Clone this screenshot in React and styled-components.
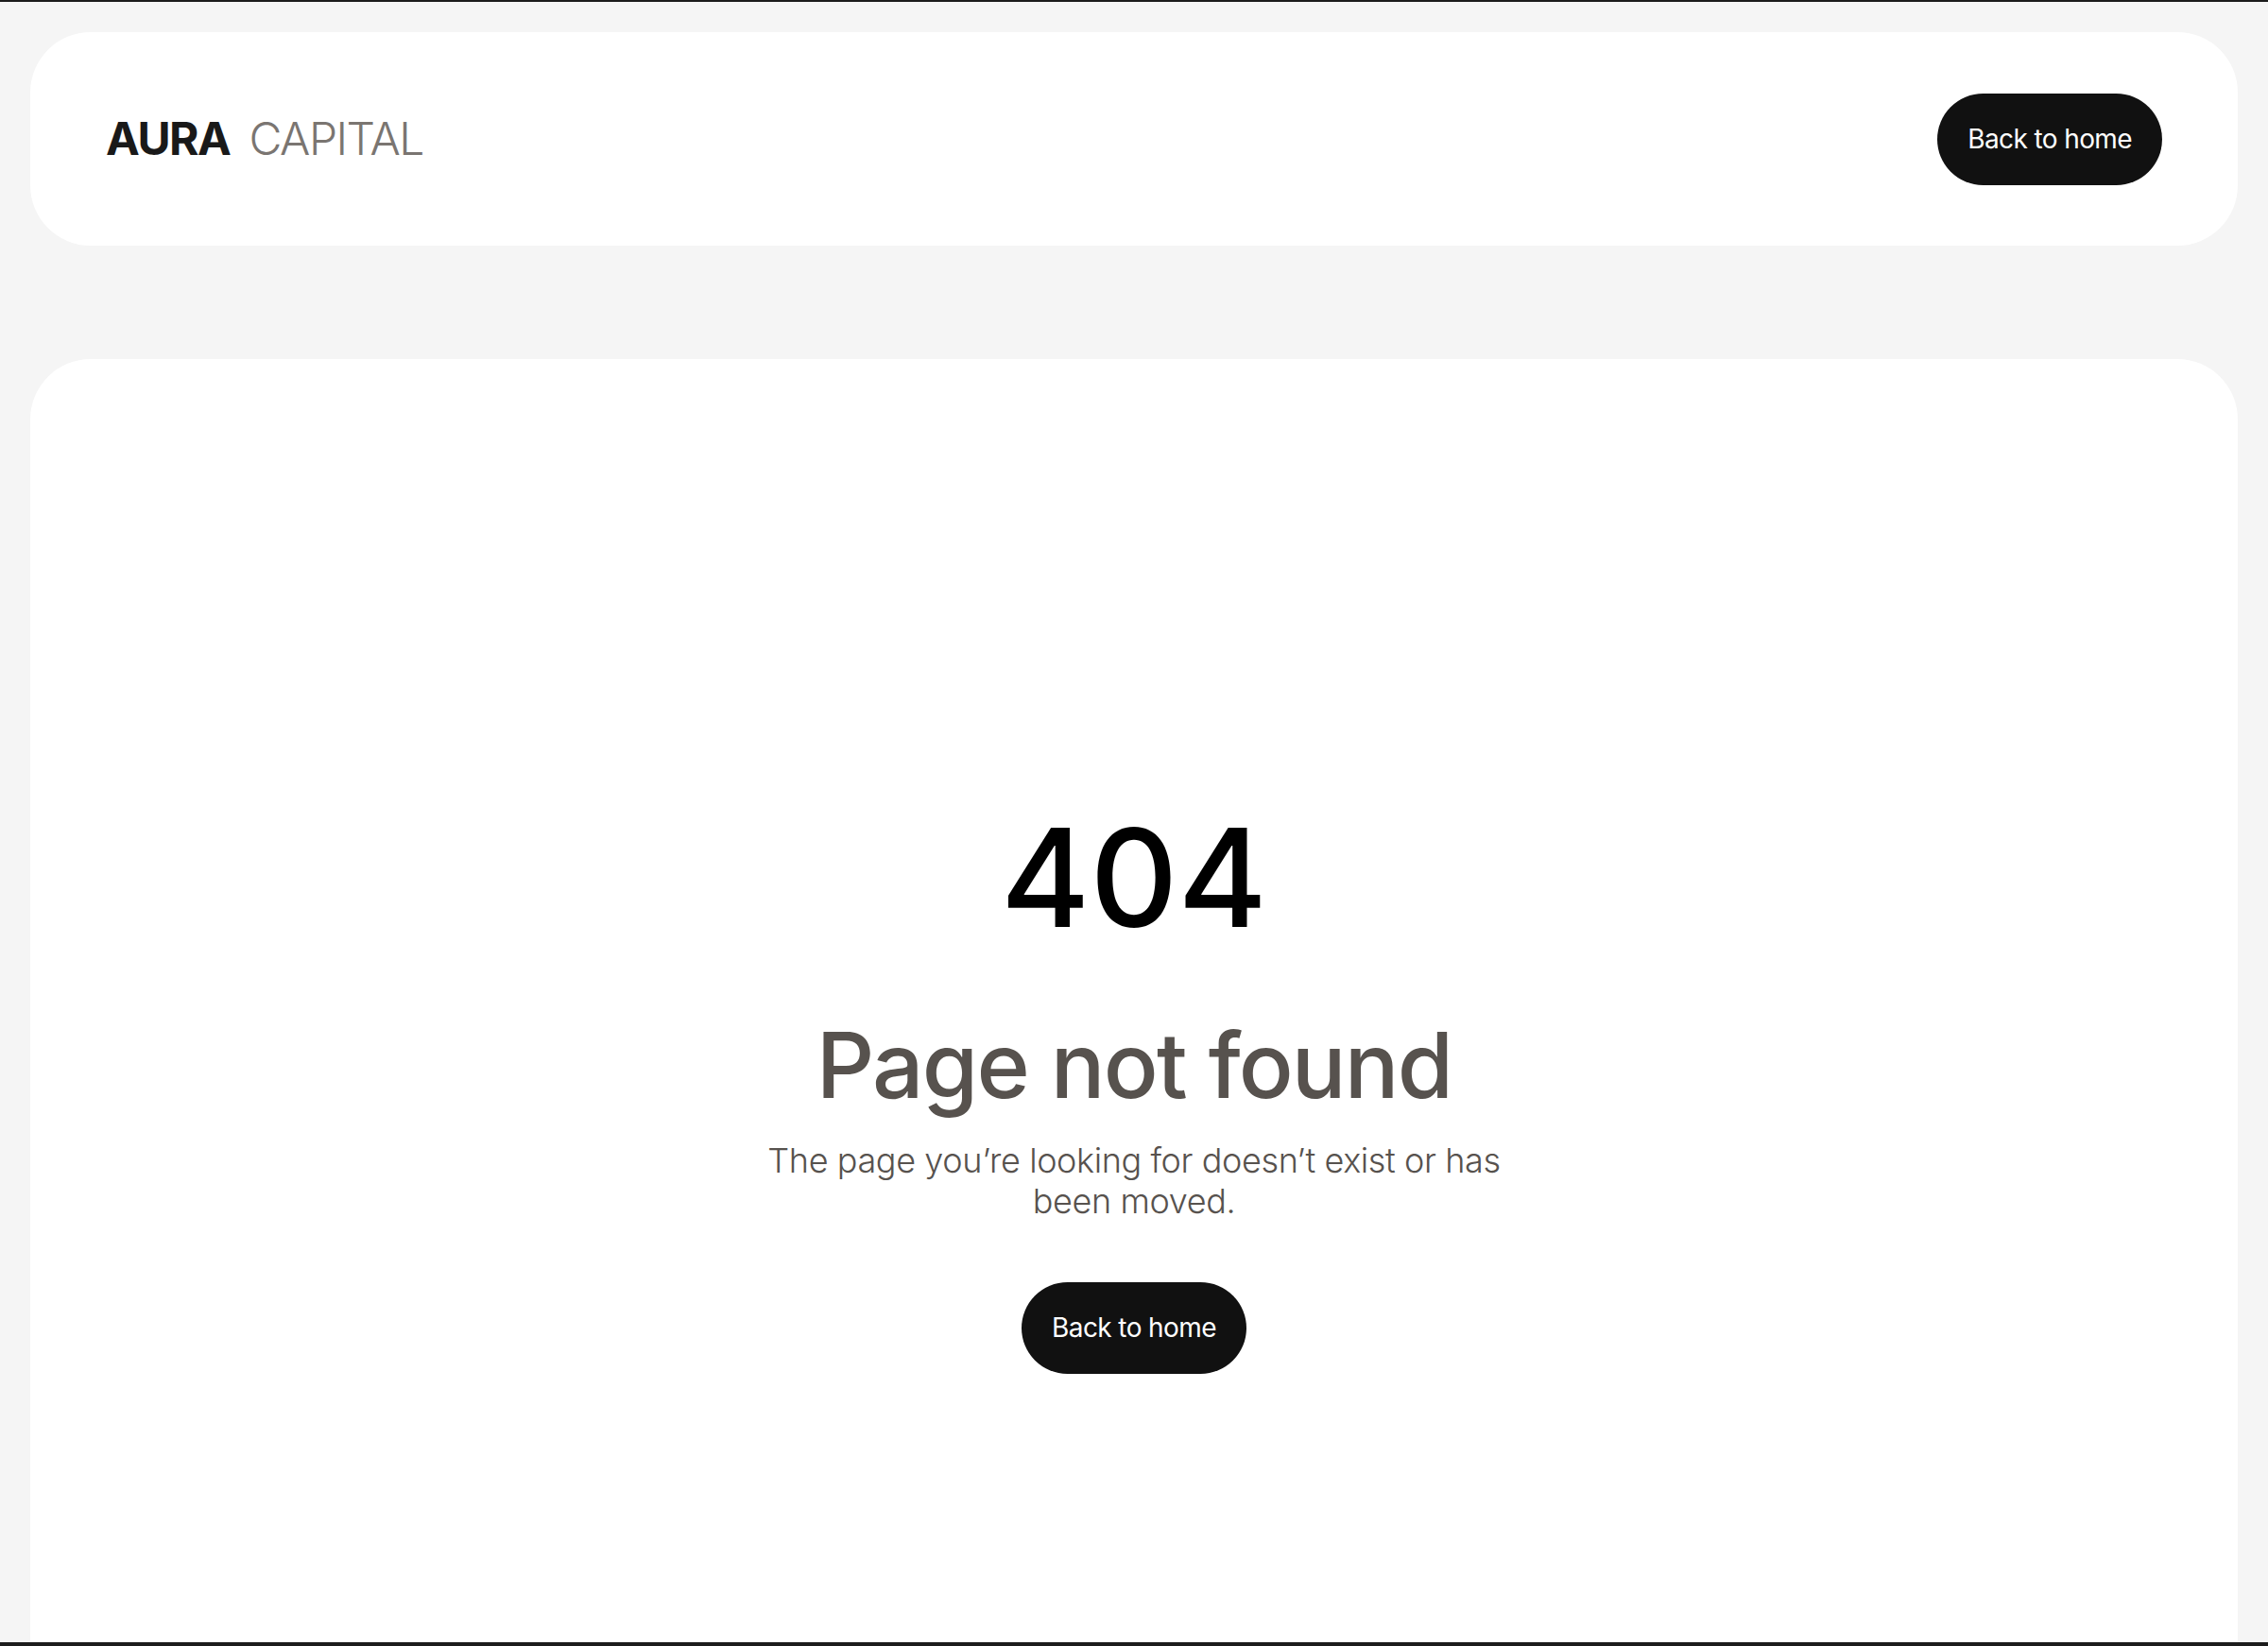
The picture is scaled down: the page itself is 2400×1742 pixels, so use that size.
import React from "react";
import styled, { createGlobalStyle } from "styled-components";

const GlobalStyle = createGlobalStyle`
  html, body {
    margin: 0;
    padding: 0;
    background: #f5f5f5;
  }
  body {
    font-family: Inter, "Noto Sans", "Liberation Sans", sans-serif;
    border-top: 2px solid #1c1c1c;
    -webkit-font-smoothing: antialiased;
  }
  * { box-sizing: border-box; }
`;

const Page = styled.div`
  display: flex;
  flex-direction: column;
  gap: 120px;
  padding: 32px 32px 0;
`;

const Header = styled.header`
  height: 226px;
  background: #ffffff;
  border-radius: 64px;
  padding: 0 80px;
  display: flex;
  align-items: center;
  justify-content: space-between;
`;

const Logo = styled.div`
  display: flex;
  align-items: baseline;
  gap: 20px;
  font-size: 48px;
  line-height: 1;
`;

const LogoWord = styled.span`
  font-weight: ${(p) => (p.$light ? 300 : 700)};
  color: ${(p) => (p.$light ? "#7a7571" : "#191919")};
  letter-spacing: ${(p) => (p.$light ? "-1.5px" : "-1.5px")};
`;

const PillButton = styled.a`
  display: inline-flex;
  align-items: center;
  justify-content: center;
  height: 97px;
  padding: 0 32px;
  border-radius: 999px;
  background: #111111;
  color: #ffffff;
  font-size: 28px;
  font-weight: 400;
  letter-spacing: -0.6px;
  text-decoration: none;
  white-space: nowrap;
  cursor: pointer;
`;

const Main = styled.main`
  background: #ffffff;
  border-radius: 64px;
  min-height: 1560px;
  padding-top: 477px;
  display: flex;
  flex-direction: column;
  align-items: center;
  text-align: center;
`;

const Code = styled.h1`
  margin: 0;
  font-size: 144px;
  line-height: 1;
  font-weight: 500;
  letter-spacing: 0;
  color: #000000;
`;

const Title = styled.h2`
  margin: 69px 0 0;
  font-size: 96px;
  line-height: 1.2;
  font-weight: 500;
  letter-spacing: -1.8px;
  color: #57524e;
`;

const Message = styled.p`
  margin: 22px 0 0;
  max-width: 790px;
  font-size: 36px;
  line-height: 1.2;
  font-weight: 300;
  letter-spacing: -0.4px;
  color: #57524e;
`;

const Actions = styled.div`
  margin-top: 63px;
`;

const FrameEdge = styled.div`
  position: fixed;
  left: 0;
  right: 0;
  bottom: 0;
  height: 4px;
  background: #1c1c1c;
`;

export default function App() {
  return (
    <>
      <GlobalStyle />
      <Page>
        <Header>
          <Logo>
            <LogoWord>AURA</LogoWord>
            <LogoWord $light>CAPITAL</LogoWord>
          </Logo>
          <PillButton href="#">Back to home</PillButton>
        </Header>
        <Main>
          <Code>404</Code>
          <Title>Page not found</Title>
          <Message>
            The page you’re looking for doesn’t exist or has been moved.
          </Message>
          <Actions>
            <PillButton href="#">Back to home</PillButton>
          </Actions>
        </Main>
      </Page>
      <FrameEdge />
    </>
  );
}
